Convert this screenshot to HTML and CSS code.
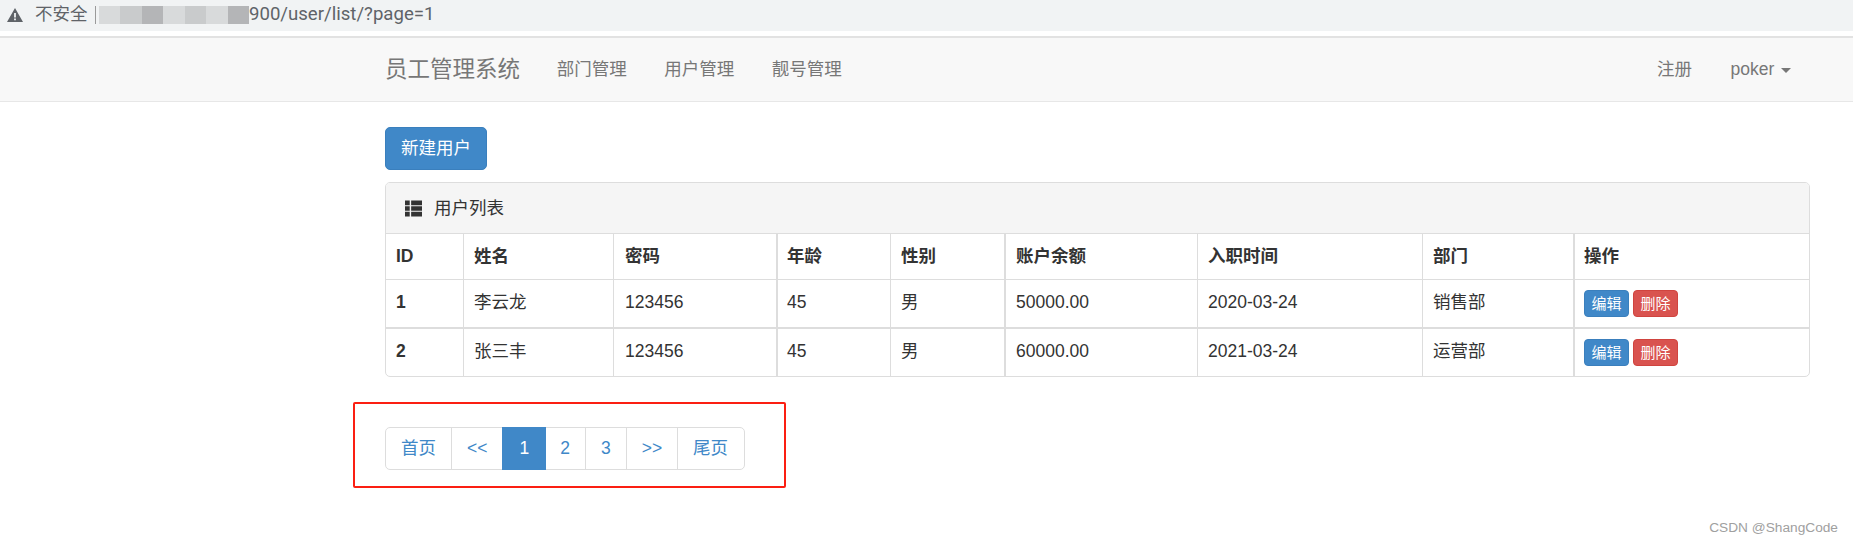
FILE: index.html
```html
<!DOCTYPE html>
<html lang="zh-CN">
<head>
  <meta charset="UTF-8" />
  <title>用户列表</title>
  <link rel="stylesheet" href="styles.css">
</head>
<body>
  <div class="addr">
    <svg class="warn" width="16" height="14" viewBox="0 0 16 14"><path fill="#5f6368" d="M8 0 16 14H0ZM7.1 5v4.6h1.8V5ZM7.1 10.6v1.7h1.8v-1.7Z" fill-rule="evenodd"/></svg>
    <span class="insecure">不安全</span>
    <span class="sep"></span>
    <span class="blur"><i class="b1"></i><i class="b2"></i><i class="b3"></i><i class="b1"></i><i class="b2"></i><i class="b1"></i><i class="b3"></i></span>
    <span class="url">900/user/list/?page=1</span>
  </div>

  <nav class="navbar">
    <div class="wrap nav-inner">
      <a class="brand">员工管理系统</a>
      <a class="nav-link">部门管理</a>
      <a class="nav-link">用户管理</a>
      <a class="nav-link">靓号管理</a>
      <a class="nav-link push">注册</a>
      <a class="nav-link">poker <span class="caret"></span></a>
    </div>
  </nav>

  <div class="wrap">
    <a class="btn btn-primary btn-new">新建用户</a>

    <div class="panel">
      <div class="panel-heading">
        <svg class="th-list" width="17" height="17" viewBox="0 0 18 17"><path fill="#333" d="M0 0h5v5H0ZM6.500 0H18v5H6.500ZM0 6h5v5H0ZM6.500 6H18v5H6.500ZM0 12h5v5H0ZM6.500 12H18v5H6.500Z"/></svg>
        <span>用户列表</span>
      </div>
      <table class="table">
        <thead>
          <tr>
            <th>ID</th><th>姓名</th><th>密码</th><th>年龄</th><th>性别</th><th>账户余额</th><th>入职时间</th><th>部门</th><th>操作</th>
          </tr>
        </thead>
        <tbody>
          <tr>
            <th>1</th><td>李云龙</td><td>123456</td><td>45</td><td>男</td><td>50000.00</td><td>2020-03-24</td><td>销售部</td>
            <td><a class="btn-xs btn-primary">编辑</a><a class="btn-xs btn-danger">删除</a></td>
          </tr>
          <tr>
            <th>2</th><td>张三丰</td><td>123456</td><td>45</td><td>男</td><td>60000.00</td><td>2021-03-24</td><td>运营部</td>
            <td><a class="btn-xs btn-primary">编辑</a><a class="btn-xs btn-danger">删除</a></td>
          </tr>
        </tbody>
      </table>
    </div>

    <div class="pager">
      <ul class="pagination">
        <li>首页</li>
        <li>&lt;&lt;</li>
        <li class="active">1</li>
        <li>2</li>
        <li>3</li>
        <li>&gt;&gt;</li>
        <li>尾页</li>
      </ul>
      <div class="mark"></div>
    </div>
  </div>

  <div class="watermark">CSDN @ShangCode</div>
</body>
</html>
```

FILE: styles.css
```css
html, body {
  height: 100%;
}
body {
  margin: 0;
  position: relative;
  overflow: hidden;
  background: #fff;
  color: #333;
  font-family: "Liberation Sans", "Noto Sans CJK SC", sans-serif;
  font-size: 17.5px;
  line-height: 25px;
}
a {
  text-decoration: none;
}

/* browser address bar */
.addr {
  height: 31px;
  box-sizing: border-box;
  padding-bottom: 2px;
  margin-bottom: 5px;
  display: flex;
  align-items: center;
  background: #f1f3f4;
  color: #5f6368;
}
.warn {
  margin-left: 7px;
}
.insecure {
  margin-left: 12px;
  width: 52px;
  white-space: nowrap;
}
.sep {
  width: 1px;
  height: 18px;
  margin-left: 8px;
  background: #9a9a9a;
}
.blur {
  display: flex;
  margin-left: 3px;
  width: 150px;
  height: 18px;
}
.blur i {
  flex: 1;
}
.b1 { background: #d8dadb; }
.b2 { background: #c9cbcc; }
.b3 { background: #b4b5b7; }
.url {
  font-family: "Roboto", sans-serif;
  font-size: 18.6px;
  white-space: nowrap;
}

/* navbar */
.wrap {
  width: 1425px;
  margin-left: 385px;
}
.navbar {
  height: 63px;
  background: #f8f8f8;
  border-top: 2px solid #e2e2e2;
  border-bottom: 1px solid #e7e7e7;
}
.nav-inner {
  display: flex;
  align-items: center;
  height: 100%;
}
.brand {
  color: #777;
  font-size: 22.5px;
  padding-right: 18px;
}
.nav-link {
  color: #777;
  padding: 0 18.75px;
}
.push {
  margin-left: auto;
  margin-right: 1px;
}
.caret {
  display: inline-block;
  margin-left: 2px;
  vertical-align: middle;
  border-top: 5px solid #777;
  border-left: 5px solid transparent;
  border-right: 5px solid transparent;
}

/* buttons */
.btn {
  display: block;
  box-sizing: border-box;
  width: 102px;
  height: 43px;
  margin-top: 25px;
  line-height: 41px;
  text-align: center;
  border-radius: 5px;
}
.btn-primary {
  background: #4088c8;
  border: 1px solid #3a7fbd;
  color: #fff;
}
.btn-danger {
  background: #d9534f;
  border: 1px solid #d0443f;
  color: #fff;
}
.btn-xs {
  display: inline-block;
  box-sizing: border-box;
  width: 45px;
  height: 27px;
  font-size: 15px;
  line-height: 25px;
  text-align: center;
  border-radius: 4px;
  vertical-align: top;
}
.btn-xs + .btn-xs {
  margin-left: 4px;
}

/* panel and table */
.panel {
  margin-top: 12px;
  border: 1px solid #ddd;
  border-radius: 5px;
  overflow: hidden;
}
.panel-heading {
  height: 51px;
  box-sizing: border-box;
  padding-left: 19px;
  display: flex;
  align-items: center;
  gap: 12px;
  background: #f5f5f5;
  border-bottom: 1px solid #ddd;
}
.table {
  width: 100%;
  table-layout: fixed;
  border-collapse: separate;
  border-spacing: 0;
}
.table th,
.table td {
  box-sizing: border-box;
  padding: 10px;
  text-align: left;
  vertical-align: top;
  border-left: 1px solid #ddd;
  border-bottom: 1px solid #ddd;
}
.table th:first-child {
  border-left: 0;
}
.table tr > :nth-child(3) {
  padding-left: 11px;
}
.table tr > :nth-child(4),
.table tr > :nth-child(6),
.table tr > :nth-child(9) {
  border-left-width: 2px;
  padding-left: 9px;
}
.table tr > :nth-child(6) {
  padding-left: 10px;
}
.table tbody tr:first-child > * {
  border-bottom-width: 2px;
}
.table tbody tr:last-child > * {
  border-bottom: 0;
}
.table thead th:nth-child(1) { width: 77px; }
.table thead th:nth-child(2) { width: 150px; }
.table thead th:nth-child(3) { width: 163px; }
.table thead th:nth-child(4) { width: 114px; }
.table thead th:nth-child(5) { width: 114px; }
.table thead th:nth-child(6) { width: 193px; }
.table thead th:nth-child(7) { width: 225px; }
.table thead th:nth-child(8) { width: 151px; }

/* pagination */
.pager {
  position: relative;
  margin-top: 50px;
}
.pagination {
  display: inline-flex;
  margin: 0;
  padding: 0;
  list-style: none;
}
.pagination li {
  height: 43px;
  box-sizing: border-box;
  padding: 8px 15px;
  margin-left: -1px;
  color: #4088c8;
  border: 1px solid #ddd;
}
.pagination li:first-child {
  margin-left: 0;
  border-radius: 5px 0 0 5px;
}
.pagination li:last-child {
  padding-right: 16px;
  border-radius: 0 5px 5px 0;
}
.pagination .active {
  position: relative;
  z-index: 1;
  color: #fff;
  background: #4088c8;
  border-color: #4088c8;
  padding: 8px 16px;
  margin-right: -1px;
}

/* red note drawn over the screenshot */
.mark {
  position: absolute;
  z-index: 2;
  left: -32px;
  top: -25px;
  width: 429px;
  height: 82px;
  border: 2px solid #fb1f12;
  border-radius: 2px;
}
.watermark {
  position: absolute;
  right: 15px;
  bottom: 7px;
  color: #a0a0a0;
  font-size: 13.7px;
  line-height: 20px;
}
```
